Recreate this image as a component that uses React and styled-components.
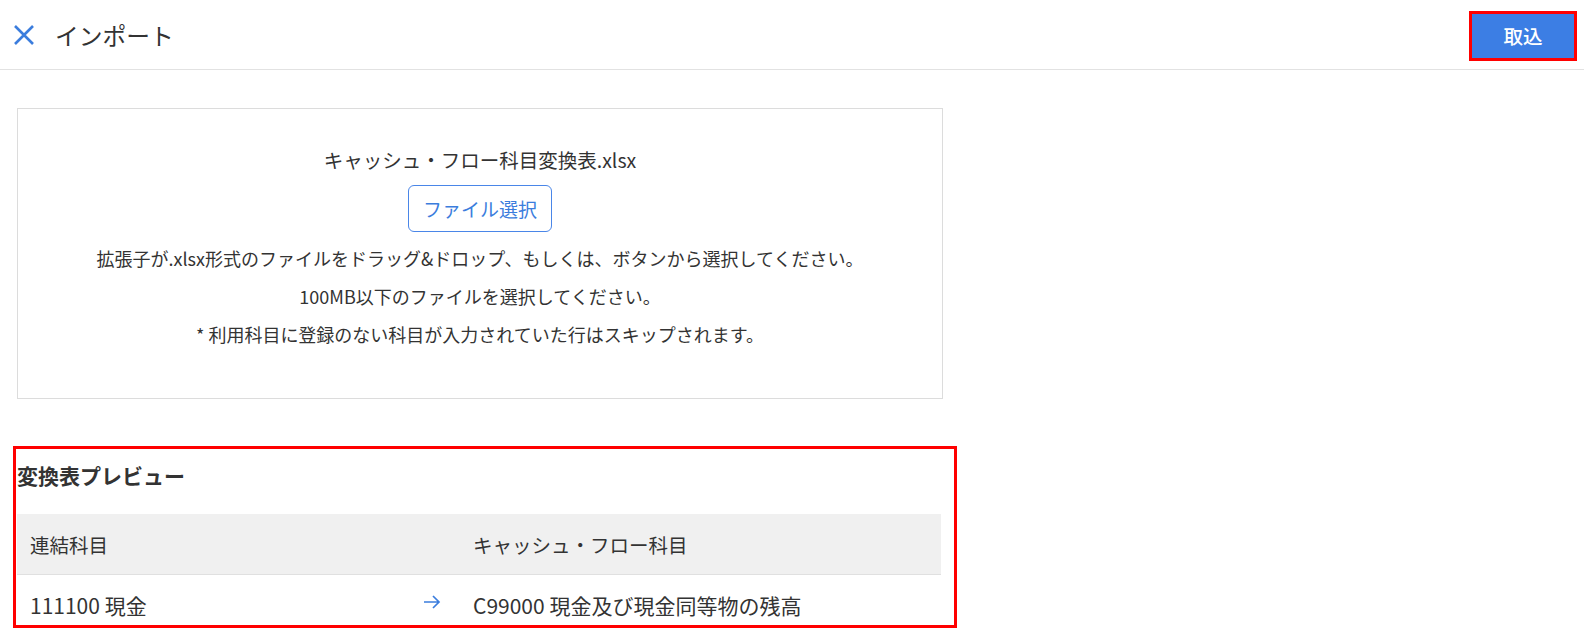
import styled, { createGlobalStyle } from 'styled-components';

const GlobalStyle = createGlobalStyle`
  html, body {
    margin: 0;
    padding: 0;
    background: #fff;
  }
  body {
    font-family: "Noto Sans CJK JP", "Noto Sans", sans-serif;
    color: #333;
  }
`;

const Page = styled.div`
  width: 1584px;
  height: 631px;
  overflow: hidden;
`;

const Header = styled.header`
  height: 69px;
  display: flex;
  align-items: center;
  justify-content: space-between;
  padding: 0 10px 0 12px;
  border-bottom: 1px solid #e2e2e2;
`;

const HeaderLeft = styled.div`
  display: flex;
  align-items: center;
`;

const CloseButton = styled.button`
  border: none;
  background: none;
  padding: 0;
  width: 24px;
  height: 24px;
  display: flex;
  align-items: center;
  justify-content: center;
  cursor: pointer;
`;

const Title = styled.h1`
  margin: 0 0 0 19px;
  font-size: 23.75px;
  font-weight: 400;
  color: #333;
  line-height: 1;
`;

const ImportButton = styled.button`
  width: 102px;
  height: 44px;
  margin-top: 2px;
  border: none;
  background: #3c7ee4;
  color: #fff;
  font-family: inherit;
  font-size: 19.5px;
  font-weight: 500;
  outline: 3px solid #ff0000;
  cursor: pointer;
`;

const Main = styled.main`
  padding: 38px 0 0 17px;
`;

const DropZone = styled.div`
  box-sizing: border-box;
  width: 926px;
  height: 291px;
  border: 1px solid #dcdcdc;
  display: flex;
  flex-direction: column;
  align-items: center;
  padding-top: 38px;
`;

const FileName = styled.div`
  font-size: 19.5px;
  line-height: 26px;
`;

const SelectButton = styled.button`
  margin-top: 12px;
  height: 47px;
  padding: 0 14px;
  border: 1px solid #4a86e8;
  border-radius: 6px;
  background: #fff;
  color: #3b7ddd;
  font-family: inherit;
  font-size: 19px;
  cursor: pointer;
`;

const Notes = styled.div`
  margin-top: 7px;
  text-align: center;
`;

const Note = styled.p`
  margin: 0;
  font-size: 18px;
  line-height: 38px;
`;

const Preview = styled.section`
  box-sizing: border-box;
  margin: 47px 0 0 -4px;
  width: 944px;
  height: 182px;
  border: 3px solid #ff0000;
  padding: 0 0 0 1px;
  overflow: hidden;
`;

const PreviewTitle = styled.h2`
  margin: 11px 0 24px;
  font-size: 21px;
  font-weight: 700;
  line-height: 30px;
`;

const Table = styled.div`
  width: 924px;
`;

const Row = styled.div`
  display: grid;
  grid-template-columns: 406px 37px 1fr;
  align-items: center;
  height: 60px;
  background: ${({ head }) => (head ? '#f0f0f0' : '#fff')};
  border-bottom: 1px solid ${({ head }) => (head ? '#e0e0e0' : 'transparent')};
  font-size: ${({ head }) => (head ? '19.5px' : '21px')};
`;

const Cell = styled.div`
  padding-left: 13px;
`;

const ArrowCell = styled.div`
  display: flex;
  align-items: center;
  margin-top: -7px;
`;

const CloseIcon = () => (
  <svg width="22" height="22" viewBox="0 0 22 22">
    <path d="M2 2L20 20M20 2L2 20" stroke="#3b7ddd" strokeWidth="2.6" fill="none" />
  </svg>
);

const ArrowIcon = () => (
  <svg width="18" height="16" viewBox="0 0 18 16">
    <path d="M1 8H16M10 2L16 8L10 14" stroke="#3b7ddd" strokeWidth="1.7" fill="none" />
  </svg>
);

const App = () => {
  return (
    <Page>
      <GlobalStyle />
      <Header>
        <HeaderLeft>
          <CloseButton>
            <CloseIcon />
          </CloseButton>
          <Title>インポート</Title>
        </HeaderLeft>
        <ImportButton>取込</ImportButton>
      </Header>
      <Main>
        <DropZone>
          <FileName>キャッシュ・フロー科目変換表.xlsx</FileName>
          <SelectButton>ファイル選択</SelectButton>
          <Notes>
            <Note>拡張子が.xlsx形式のファイルをドラッグ&ドロップ、もしくは、ボタンから選択してください。</Note>
            <Note>100MB以下のファイルを選択してください。</Note>
            <Note>* 利用科目に登録のない科目が入力されていた行はスキップされます。</Note>
          </Notes>
        </DropZone>
        <Preview>
          <PreviewTitle>変換表プレビュー</PreviewTitle>
          <Table>
            <Row head>
              <Cell>連結科目</Cell>
              <div />
              <Cell>キャッシュ・フロー科目</Cell>
            </Row>
            <Row>
              <Cell>111100 現金</Cell>
              <ArrowCell>
                <ArrowIcon />
              </ArrowCell>
              <Cell>C99000 現金及び現金同等物の残高</Cell>
            </Row>
          </Table>
        </Preview>
      </Main>
    </Page>
  );
};

export default App;
